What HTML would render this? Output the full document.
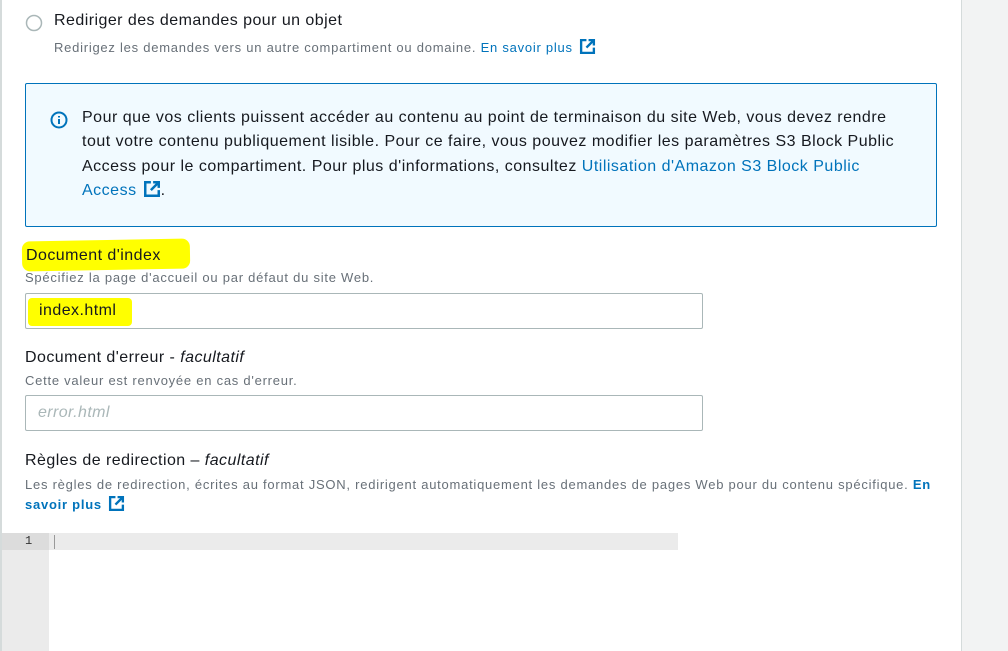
<!DOCTYPE html>
<html><head><meta charset="utf-8"><style>
*{margin:0;padding:0;box-sizing:border-box}
body{width:1008px;height:651px;overflow:hidden;background:#f2f3f3;font-family:"Liberation Sans",sans-serif;position:relative}
.panel{position:absolute;left:0;top:0;width:962px;height:651px;background:#fff;border-left:2px solid #d5dbdb;border-right:1px solid #d5dbdb}
.a{position:absolute;white-space:nowrap}
.t{font-size:16px;letter-spacing:0.45px;color:#16191f}
.d{font-size:13px;letter-spacing:0.75px;color:#687078}
.l{color:#0073bb}
.ext{display:inline-block;vertical-align:-3px;margin-left:6px}
.info{position:absolute;left:25px;top:83px;width:912px;height:144px;background:#f1faff;border:1px solid #0073bb;border-radius:2px}
.info p{position:absolute;left:56px;top:22px;white-space:nowrap;font-size:16px;letter-spacing:0.5px;line-height:24.3px;color:#16191f}
.inp{position:absolute;left:25px;width:678px;height:36px;border:1px solid #aab7b8;border-radius:2px;background:#fff}
.hl{position:absolute;background:#ffff00}
</style></head><body>
<div class="panel"></div>
<svg class="a" style="left:25px;top:14px" width="18" height="18"><circle cx="9" cy="9" r="7.5" fill="#fff" stroke="#aab7b8" stroke-width="1.5"/></svg>
<div class="a t" style="left:54px;top:12px">Rediriger des demandes pour un objet</div>
<div class="a d" style="left:54px;top:38px">Redirigez les demandes vers un autre compartiment ou domaine. <span class="l">En savoir plus<svg class="ext" width="17" height="17" viewBox="0 0 16 16"><path d="M7 2H2v12h12V9M9 2h5v5M14 2L7 9" fill="none" stroke="#0073bb" stroke-width="2.2"/></svg></span></div>
<div class="info">
<svg class="a" style="left:24px;top:27px" width="18" height="18" viewBox="0 0 18 18"><circle cx="9" cy="9" r="7.5" fill="none" stroke="#0073bb" stroke-width="2"/><path d="M9 8v5M9 5v1.5" stroke="#0073bb" stroke-width="2"/></svg>
<p>Pour que vos clients puissent accéder au contenu au point de terminaison du site Web, vous devez rendre<br>tout votre contenu publiquement lisible. Pour ce faire, vous pouvez modifier les paramètres S3 Block Public<br>Access pour le compartiment. Pour plus d'informations, consultez <span class="l">Utilisation d'Amazon S3 Block Public<br>Access<svg class="ext" width="18" height="18" viewBox="0 0 16 16"><path d="M7 2H2v12h12V9M9 2h5v5M14 2L7 9" fill="none" stroke="#0073bb" stroke-width="2.2"/></svg></span>.</p>
</div>
<div class="hl" style="left:22px;top:240px;width:168px;height:30px;border-radius:8px;transform:rotate(-1deg)"></div>
<div class="a t" style="left:26px;top:247px">Document d'index</div>
<div class="a d" style="left:25px;top:270px">Spécifiez la page d'accueil ou par défaut du site Web.</div>
<div class="inp" style="top:293px"></div>
<div class="hl" style="left:28px;top:298px;width:104px;height:28px;border-radius:4px"></div>
<div class="a t" style="left:39px;top:302px">index.html</div>
<div class="a t" style="left:25px;top:349px">Document d'erreur - <i>facultatif</i></div>
<div class="a d" style="left:25px;top:373px">Cette valeur est renvoyée en cas d'erreur.</div>
<div class="inp" style="top:395px"></div>
<div class="a" style="left:38px;top:404px;font-size:16px;letter-spacing:0.4px;color:#aab7b8;font-style:italic">error.html</div>
<div class="a t" style="left:25px;top:452px">Règles de redirection – <i>facultatif</i></div>
<div class="a d" style="left:25px;top:475px;line-height:20px">Les règles de redirection, écrites au format JSON, redirigent automatiquement les demandes de pages Web pour du contenu spécifique. <b class="l">En<br>savoir plus<svg class="ext" width="17" height="17" viewBox="0 0 16 16"><path d="M7 2H2v12h12V9M9 2h5v5M14 2L7 9" fill="none" stroke="#0073bb" stroke-width="2.2"/></svg></b></div>
<div class="a" style="left:2px;top:533px;width:47px;height:118px;background:#ebebeb"></div>
<div class="a" style="left:2px;top:533px;width:47px;height:17px;background:#dcdcdc"></div>
<div class="a" style="left:49px;top:533px;width:629px;height:17px;background:#ebebeb"></div>
<div class="a" style="left:54px;top:535px;width:1px;height:14px;background:#999"></div>
<div class="a" style="left:25px;top:534px;font-size:12px;font-family:'Liberation Mono',monospace;color:#333">1</div>
</body></html>
